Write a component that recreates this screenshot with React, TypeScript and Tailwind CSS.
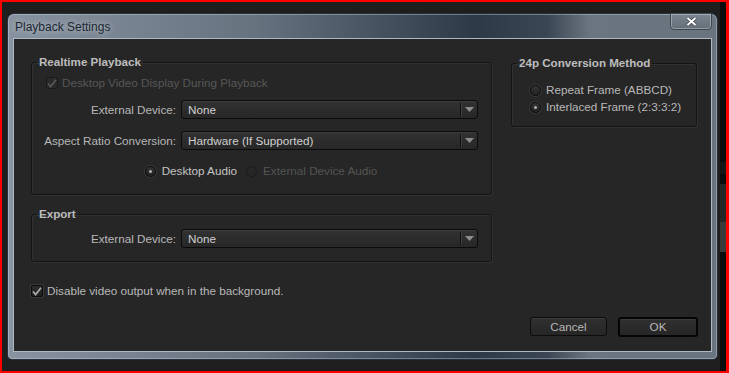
import React from "react";

const FONT = "font-['Liberation_Sans',Arial,sans-serif]";

function Arrow() {
  return (
    <svg width="9" height="5" viewBox="0 0 9 5">
      <path d="M0 0h9L4.5 5z" fill="#8e8e8e" />
    </svg>
  );
}

function Select({ value }: { value: string }) {
  return (
    <div className="flex h-[19px] items-center rounded-[3px] border border-[#0b0b0b] bg-[linear-gradient(#323232,#272727)] shadow-[inset_0_1px_0_#3c3c3c]">
      <span className="flex-1 pl-[6px] text-[#d0d0d0]">{value}</span>
      <span className="h-[13px] w-px bg-[#0e0e0e] shadow-[1px_0_0_#414141]" />
      <span className="flex w-[16px] justify-center">
        <Arrow />
      </span>
    </div>
  );
}

function Check({ disabled }: { disabled?: boolean }) {
  return (
    <span
      className={
        "flex h-[12px] w-[12px] items-center justify-center rounded-[2px] border " +
        (disabled
          ? "border-[#1a1a1a] bg-[#2a2a2a]"
          : "border-[#0c0c0c] bg-[linear-gradient(#2c2c2c,#202020)] shadow-[0_0_0_1px_#3a3a3a]")
      }
    >
      <svg width="10" height="9" viewBox="0 0 10 9">
        <path
          d="M1 4.5l2.6 3L9 0.8"
          fill="none"
          stroke={disabled ? "#555555" : "#a8a8a8"}
          strokeWidth="1.8"
        />
      </svg>
    </span>
  );
}

function Radio({ on, disabled }: { on?: boolean; disabled?: boolean }) {
  return (
    <span
      className={
        "flex h-[11px] w-[11px] items-center justify-center rounded-full border " +
        (disabled
          ? "border-[#1b1b1b] bg-[#262626]"
          : "border-[#0c0c0c] bg-[linear-gradient(#353535,#222222)] shadow-[0_0_0_1px_#3a3a3a]")
      }
    >
      {on && <span className="h-[3px] w-[3px] rounded-full bg-[#b0b0b0]" />}
    </span>
  );
}

function Group({
  title,
  className,
  children,
}: {
  title: string;
  className?: string;
  children: React.ReactNode;
}) {
  return (
    <fieldset className="rounded-[3px] border border-[#141414] shadow-[inset_1px_1px_0_#323232,1px_1px_0_#323232]">
      <legend className="ml-[5px] px-[2px] text-[11.6px] leading-[14px] font-bold text-[#bdbdbd]">
        {title}
      </legend>
      <div className={className}>{children}</div>
    </fieldset>
  );
}

export default function App() {
  return (
    <div
      className={`${FONT} h-[373px] w-[729px] overflow-hidden border-2 border-r-[3px] border-[#ff0000] bg-[#1e1e1e] text-[11.7px] leading-[14px] text-[#b8b8b8]`}
    >
      <div className="flex h-full">
        {/* ================= DIALOG ================= */}
        <div className="mt-[11px] ml-[5px] flex h-[347px] w-[711px] flex-col rounded-t-[7px] rounded-b-[5px] border border-[#27303a] bg-[linear-gradient(90deg,#8793a0_0%,#66727e_35%,#2c3947_66%,#3a4653_76%,#6b7580_82%,#6a747e_100%)] px-[5px] pb-[7px] shadow-[inset_0_0_0_1px_rgba(220,230,240,0.35)]">
          {/* title bar */}
          <div className="flex h-[24px] items-start">
            <span className="mt-[6px] ml-[2px] text-[12px] text-[#1c2733] [text-shadow:0_0_6px_rgba(255,255,255,0.6)]">
              Playback Settings
            </span>
            <button className="mt-[-1px] ml-auto flex h-[17px] w-[42px] items-center justify-center rounded-b-[4px] border border-[#3c4650] bg-[linear-gradient(#7c8691,#646e79)] shadow-[inset_0_0_0_1px_rgba(255,255,255,0.3)]">
              <svg width="11" height="9" viewBox="0 0 11 9">
                <path d="M1.5 1l8 7M9.5 1l-8 7" stroke="#3a424b" strokeWidth="3.4" />
                <path d="M1.5 1l8 7M9.5 1l-8 7" stroke="#ffffff" strokeWidth="2" />
              </svg>
            </button>
          </div>

          {/* content */}
          <div className="flex flex-1 flex-col border border-[#aeb8c2] bg-[#262626] pt-[16px] pr-[13px] pb-[14px] pl-[17px]">
            <div className="flex gap-[19px]">
              {/* left column */}
              <div className="flex w-[461px] flex-col gap-[12px]">
                <Group title="Realtime Playback" className="pt-[7px] pr-[13px] pb-[16px] pl-[12px]">
                  <div className="flex items-center gap-[4px] pl-[2px] text-[#575757]">
                    <Check disabled />
                    <span>Desktop Video Display During Playback</span>
                  </div>
                  <div className="mt-[10px] grid grid-cols-[132px_1fr] items-center gap-x-[5px] gap-y-[12px]">
                    <span className="text-right whitespace-nowrap">External Device:</span>
                    <Select value="None" />
                    <span className="text-right whitespace-nowrap">Aspect Ratio Conversion:</span>
                    <Select value="Hardware (If Supported)" />
                  </div>
                  <div className="mt-[14px] flex items-center justify-center">
                    <Radio on />
                    <span className="ml-[6px] text-[#c4c4c4]">Desktop Audio</span>
                    <span className="ml-[9px]">
                      <Radio disabled />
                    </span>
                    <span className="ml-[6px] text-[#545454]">External Device Audio</span>
                  </div>
                </Group>

                <Group title="Export" className="pt-[8px] pr-[13px] pb-[13px] pl-[12px]">
                  <div className="grid grid-cols-[132px_1fr] items-center gap-x-[5px]">
                    <span className="text-right whitespace-nowrap">External Device:</span>
                    <Select value="None" />
                  </div>
                </Group>

                <div className="mt-[10px] flex items-center gap-[4px]">
                  <Check />
                  <span>Disable video output when in the background.</span>
                </div>
              </div>

              {/* right column */}
              <div className="w-[186px] pt-[1px]">
                <Group title="24p Conversion Method" className="pt-[13px] pr-[10px] pb-[12px] pl-[18px]">
                  <div className="flex flex-col gap-[3px]">
                    <div className="flex items-center gap-[5px]">
                      <Radio />
                      <span>Repeat Frame (ABBCD)</span>
                    </div>
                    <div className="flex items-center gap-[5px]">
                      <Radio on />
                      <span>Interlaced Frame (2:3:3:2)</span>
                    </div>
                  </div>
                </Group>
              </div>
            </div>

            {/* buttons */}
            <div className="mt-auto flex justify-end gap-[11px]">
              <button className="h-[19px] w-[77px] rounded-[3px] border border-[#0c0c0c] bg-[linear-gradient(#303030,#262626)] text-[#b8b8b8] shadow-[inset_0_1px_0_#3c3c3c]">
                Cancel
              </button>
              <button className="h-[20px] w-[80px] rounded-[3px] border-2 border-[#050505] bg-[linear-gradient(#303030,#262626)] text-[#b8b8b8] shadow-[inset_0_1px_0_#3c3c3c]">
                OK
              </button>
            </div>
          </div>
        </div>

        {/* right backdrop */}
        <div className="ml-[2px] flex flex-1 flex-col bg-[#0c0c0c]">
          <div className="mt-[160px] h-[12px] bg-[#161616]" />
          <div className="mt-[10px] h-[38px] bg-[#262626]" />
          <div className="h-[30px] bg-[#3a3a3a]" />
        </div>
      </div>
    </div>
  );
}
